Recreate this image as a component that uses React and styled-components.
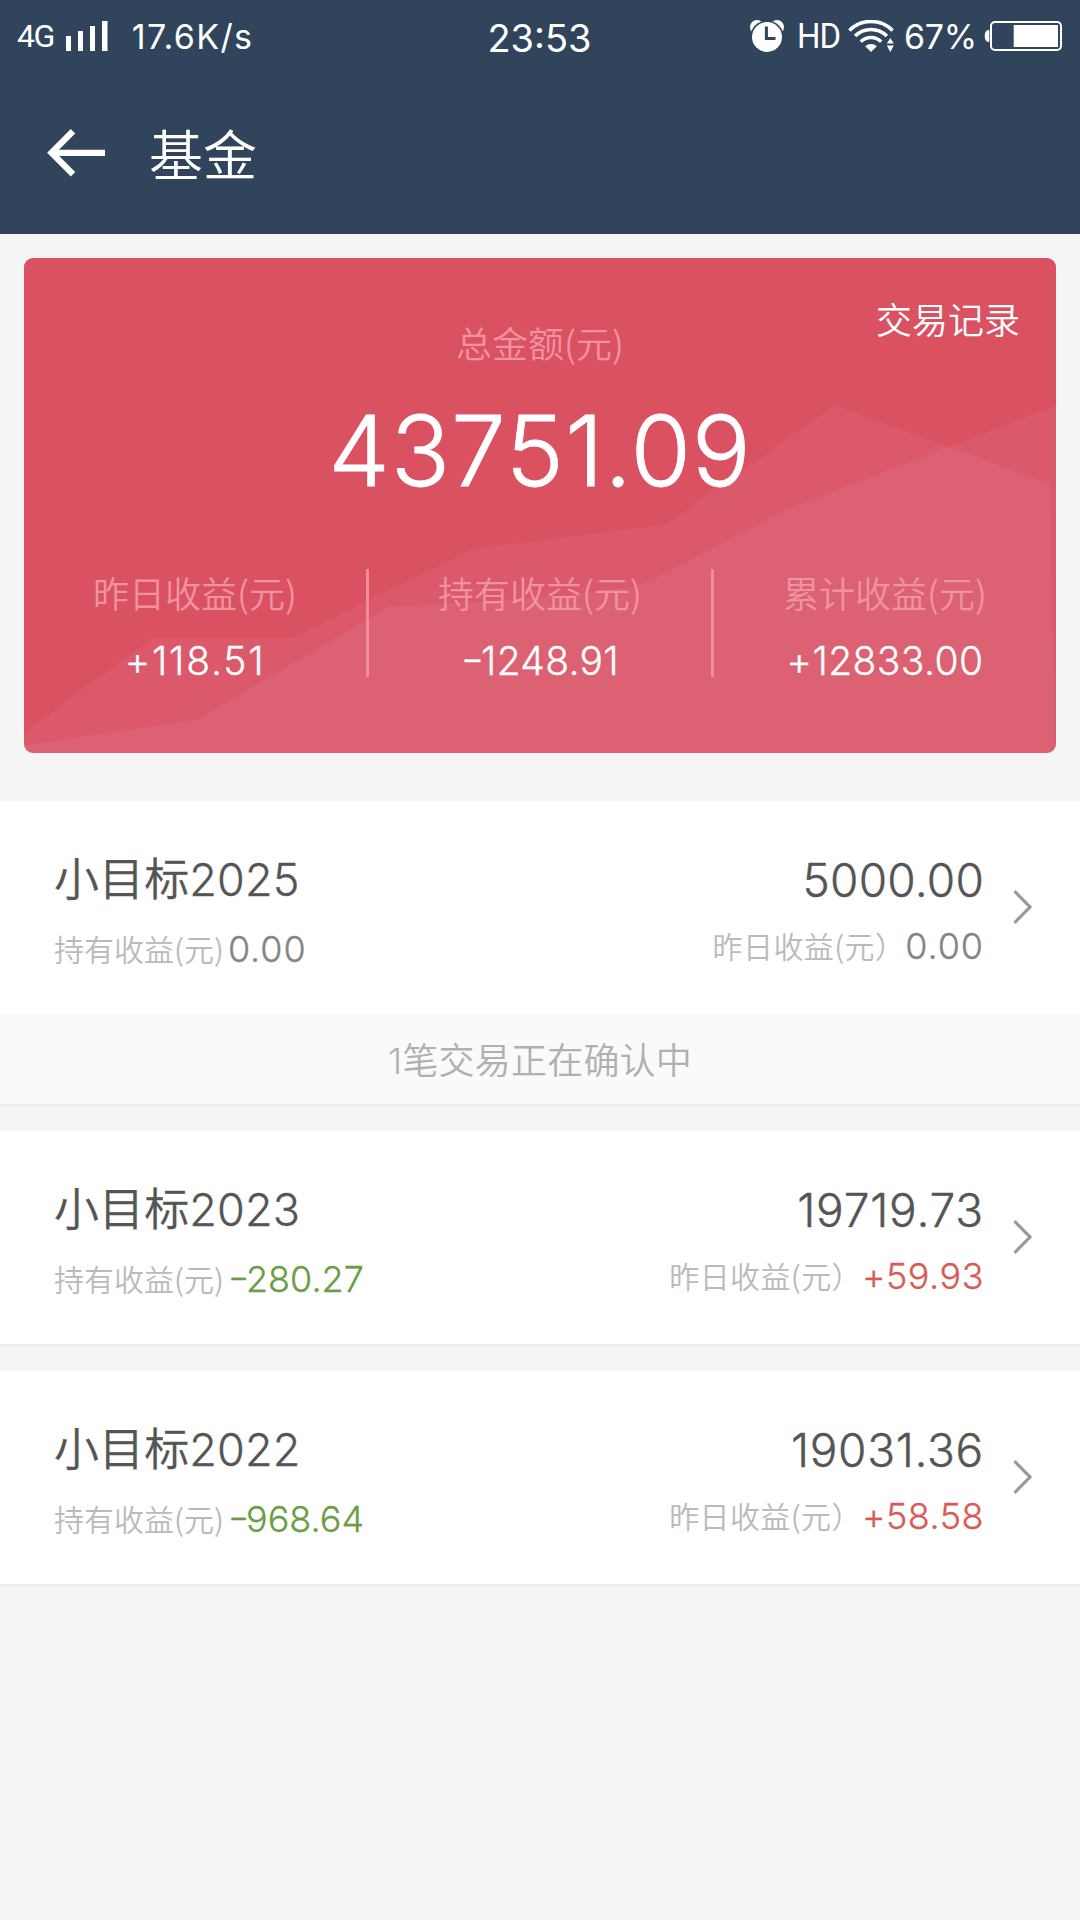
import React from 'react';
import styled, { createGlobalStyle } from 'styled-components';

const latin = `Inter, 'Noto Sans CJK SC', sans-serif`;
const cjk = `'Noto Sans CJK SC', Inter, sans-serif`;

const GlobalStyle = createGlobalStyle`
  body {
    margin: 0;
    background: #f5f5f5;
    font-family: ${latin};
    font-weight: 350;
  }
`;

const Page = styled.div`
  width: 1080px;
  min-height: 1920px;
  background: #f5f5f5;
`;

const TopBar = styled.header`
  height: 234px;
  color: #fff;
  background: #30445c;
`;

const StatusBar = styled.div`
  display: grid;
  grid-template-columns: 1fr auto 1fr;
  align-items: center;
  height: 72px;
  padding: 0 18px 0 17px;
  box-sizing: border-box;
  font-weight: 400;
  white-space: nowrap;
`;

const StatusGroup = styled.div`
  display: flex;
  align-items: center;
  justify-content: ${(props) => (props.$end ? 'flex-end' : 'flex-start')};

  svg {
    display: block;
    flex: none;
  }
`;

const Network = styled.span`
  margin-right: 12px;
  font-family: Roboto, sans-serif;
  font-size: 32px;
  line-height: 36px;
  letter-spacing: -1.5px;
`;

const Speed = styled.span`
  margin-left: 24px;
  padding-top: 2px;
  font-size: 34px;
  line-height: 36px;
  letter-spacing: 1.4px;
`;

const Time = styled.span`
  padding-top: 3px;
  font-size: 38px;
  line-height: 40px;
`;

const HdMark = styled.span`
  width: 45px;
  margin: 0 6px 0 13px;
  padding-top: 2px;
  font-family: Roboto, sans-serif;
  font-size: 35px;
  line-height: 36px;
  letter-spacing: -1px;
  transform: scaleX(0.94);
  transform-origin: left;
`;

const Percent = styled.span`
  margin: 0 7px 0 10px;
  padding-top: 2px;
  font-size: 34px;
  line-height: 36px;
  letter-spacing: -0.2px;
`;

const NavBar = styled.div`
  display: flex;
  align-items: center;
  height: 162px;
  padding-left: 47px;
`;

const NavTitle = styled.h1`
  margin: 0 0 0 44px;
  font-family: ${cjk};
  font-size: 54px;
  font-weight: 350;
  line-height: 60px;
`;

const Card = styled.section`
  position: relative;
  height: 495px;
  margin: 24px 24px 48px;
  border-radius: 9px;
  overflow: hidden;
  color: #fff;
  background: #da5162;
`;

const CardChart = styled.svg`
  position: absolute;
  inset: 0;
`;

const CardBody = styled.div`
  position: relative;
  padding-top: 40px;
`;

const CardHead = styled.div`
  display: grid;
  grid-template-columns: 1fr auto 1fr;
  align-items: start;
`;

const SoftLabel = styled.div`
  font-family: ${cjk};
  font-size: 36px;
  line-height: 40px;
  color: #f093a0;
`;

const TotalLabel = styled(SoftLabel)`
  grid-column: 2;
  margin-top: 24px;
`;

const RecordLink = styled.a`
  justify-self: end;
  margin-right: 36px;
  font-family: ${cjk};
  font-size: 36px;
  line-height: 40px;
`;

const Total = styled.div`
  margin-top: 39px;
  font-size: 98px;
  line-height: 100px;
  letter-spacing: 0.9px;
  text-align: center;
  -webkit-text-stroke: 0.8px;
`;

const Stats = styled.div`
  display: flex;
  margin-top: 68px;
`;

const Stat = styled.div`
  flex: 1;
  padding-top: 3px;
  text-align: center;
`;

const StatValue = styled.div`
  margin-top: 24px;
  font-size: 39px;
  line-height: 50px;
  letter-spacing: ${(props) => props.$tracking}px;
  -webkit-text-stroke: 0.3px;
`;

const Divider = styled.i`
  width: 3px;
  height: 108px;
  background: #ee8e9b;
`;

/* the minus sits at half digit height and is wider than a plain hyphen */
const Minus = styled.span`
  display: inline-block;
  margin-right: 0.05em;
  transform: translateY(-0.06em) scaleX(1.3);
  transform-origin: left;
`;

const Fund = styled.section`
  margin-bottom: 24px;
  border-bottom: 3px solid #ededed;
  background: #fff;
`;

const FundRow = styled.div`
  display: flex;
  align-items: flex-start;
  height: 213px;
  padding: 47px 48px 0 54px;
  box-sizing: border-box;
`;

const FundSide = styled.div`
  display: flex;
  flex-direction: column;
  align-items: ${(props) => (props.$end ? 'flex-end' : 'flex-start')};
  gap: ${(props) => (props.$end ? 9 : 12)}px;
  margin-left: ${(props) => (props.$end ? 'auto' : 0)};
`;

const FundName = styled.div`
  font-size: 45px;
  line-height: 64px;
  letter-spacing: 0.1px;
  color: #555;
  -webkit-text-stroke: 0.3px;
`;

const FundAmount = styled.div`
  font-size: 46px;
  line-height: 64px;
  letter-spacing: ${(props) => props.$tracking}px;
  color: #555;
  -webkit-text-stroke: 0.4px;
`;

const Profit = styled.div`
  display: flex;
  align-items: center;
  height: 50px;
`;

const ProfitLabel = styled.span`
  margin-top: -3px;
  font-family: ${cjk};
  font-size: 30px;
  line-height: 50px;
  letter-spacing: ${(props) => (props.$wide ? 0.4 : 0)}px;
  color: #bababa;
`;

const tones = {
  flat: { color: '#858585', tracking: 0.9 },
  down: { color: '#6b9d45', tracking: 0 },
  up: { color: '#d75c57', tracking: 0.5 },
};

const ProfitValue = styled.span`
  margin-left: ${(props) => props.$gap || 0}px;
  font-size: 36px;
  line-height: 50px;
  letter-spacing: ${(props) => tones[props.$tone].tracking}px;
  color: ${(props) => tones[props.$tone].color};
  -webkit-text-stroke: 0.3px;
`;

const Chevron = styled.svg`
  margin: 42px 0 0 29px;
`;

const Pending = styled.div`
  height: 90px;
  box-sizing: border-box;
  padding-top: 2px;
  font-size: 36px;
  line-height: 90px;
  letter-spacing: 0.2px;
  text-align: center;
  color: #b0b0b0;
  background: #fafafa;
`;

const stats = [
  { label: '昨日收益(元)', value: '+118.51', tracking: 1.8 },
  { label: '持有收益(元)', value: '-1248.91', tracking: 0.3 },
  { label: '累计收益(元)', value: '+12833.00', tracking: 0.4 },
];

const funds = [
  {
    name: '小目标2025',
    amount: '5000.00',
    tracking: 0.2,
    held: '0.00',
    heldTone: 'flat',
    daily: '0.00',
    dailyTone: 'flat',
    pending: '1笔交易正在确认中',
  },
  {
    name: '小目标2023',
    amount: '19719.73',
    tracking: 0.8,
    held: '-280.27',
    heldTone: 'down',
    daily: '+59.93',
    dailyTone: 'up',
  },
  {
    name: '小目标2022',
    amount: '19031.36',
    tracking: 0.7,
    held: '-968.64',
    heldTone: 'down',
    daily: '+58.58',
    dailyTone: 'up',
  },
];

const SignalIcon = () => (
  <svg width="42" height="30" fill="#fff">
    <rect x="0" y="15" width="5" height="15" />
    <rect x="12" y="10" width="5" height="20" />
    <rect x="24" y="5" width="5" height="25" />
    <rect x="36" y="0" width="5.5" height="30" />
  </svg>
);

const AlarmIcon = () => (
  <svg width="34" height="32" viewBox="0 0 34 32">
    <circle cx="7" cy="7" r="7" fill="#fff" />
    <circle cx="27" cy="7" r="7" fill="#fff" />
    <circle cx="17" cy="17" r="16.6" fill="#30445c" />
    <circle cx="17" cy="17" r="15" fill="#fff" />
    <path d="M16.4 6.5V18.4H25.5" fill="none" stroke="#30445c" strokeWidth="3" />
  </svg>
);

const WifiIcon = () => (
  <svg width="46" height="32" viewBox="0 0 46 32">
    <g fill="none" stroke="#fff" strokeWidth="3.5">
      <path d="M1.4 10.4A30.5 30.5 0 0 1 44.6 10.4" />
      <path d="M7.1 16.1A22.5 22.5 0 0 1 38.9 16.1" />
      <path d="M12.8 21.8A14.5 14.5 0 0 1 33.2 21.8" />
    </g>
    <path d="M23 32L17.2 26.2A8.4 8.4 0 0 1 28.8 26.2Z" fill="#fff" />
    <path d="M38.8 23.6L42.3 18L45.8 23.6ZM38.8 25.4L42.3 32L45.8 25.4Z" fill="#fff" />
  </svg>
);

const BatteryIcon = () => (
  <svg width="78" height="30" viewBox="0 0 78 30">
    <path d="M5.3 9H4Q0.7 10 0.7 15T4 21H5.3Z" fill="#fff" />
    <rect x="7" y="1" width="70" height="28" rx="4" fill="none" stroke="#fff" strokeWidth="2" />
    <rect x="29.7" y="4" width="44.3" height="22" fill="#fff" />
  </svg>
);

const BackIcon = () => (
  <svg width="58" height="48" viewBox="0 0 58 48">
    <path
      d="M26 2.3L4.5 23.8L26 45.3M5 23.8H58"
      fill="none"
      stroke="#fff"
      strokeWidth="6.2"
    />
  </svg>
);

const Signed = ({ value }) =>
  value.startsWith('-') ? (
    <>
      <Minus>-</Minus>
      {value.slice(1)}
    </>
  ) : (
    value
  );

const FundItem = ({ fund }) => (
  <Fund>
    <FundRow>
      <FundSide>
        <FundName>{fund.name}</FundName>
        <Profit>
          <ProfitLabel>持有收益(元)</ProfitLabel>
          <ProfitValue $tone={fund.heldTone} $gap={4}>
            <Signed value={fund.held} />
          </ProfitValue>
        </Profit>
      </FundSide>
      <FundSide $end>
        <FundAmount $tracking={fund.tracking}>{fund.amount}</FundAmount>
        <Profit>
          <ProfitLabel $wide>昨日收益(元）</ProfitLabel>
          <ProfitValue $tone={fund.dailyTone}>
            <Signed value={fund.daily} />
          </ProfitValue>
        </Profit>
      </FundSide>
      <Chevron width="19" height="34" viewBox="0 0 19 34">
        <path d="M1.5 1.2L17 17L1.5 32.8" fill="none" stroke="#999" strokeWidth="3.2" />
      </Chevron>
    </FundRow>
    {fund.pending && <Pending>{fund.pending}</Pending>}
  </Fund>
);

export default function App() {
  return (
    <Page>
      <GlobalStyle />
      <TopBar>
        <StatusBar>
          <StatusGroup>
            <Network>4G</Network>
            <SignalIcon />
            <Speed>17.6K/s</Speed>
          </StatusGroup>
          <Time>23:53</Time>
          <StatusGroup $end>
            <AlarmIcon />
            <HdMark>HD</HdMark>
            <WifiIcon />
            <Percent>67%</Percent>
            <BatteryIcon />
          </StatusGroup>
        </StatusBar>
        <NavBar>
          <BackIcon />
          <NavTitle>基金</NavTitle>
        </NavBar>
      </TopBar>

      <Card>
        {/* two translucent trend areas behind the figures */}
        <CardChart width="1032" height="495" viewBox="0 0 1032 495">
          <path
            d="M0 474.5L129 380H268L447 291.5L641 266.5L811 147.5L1026 226L1031.5 495H0Z"
            fill="rgba(246, 195, 226, 0.07)"
          />
          <path
            d="M0 487.5L174 461.5L365 349L516 340L616 328L763 251.5L1032 147.5V495H0Z"
            fill="rgba(230, 213, 220, 0.07)"
          />
        </CardChart>
        <CardBody>
          <CardHead>
            <TotalLabel>总金额(元)</TotalLabel>
            <RecordLink>交易记录</RecordLink>
          </CardHead>
          <Total>43751.09</Total>
          <Stats>
            {stats.map((stat, index) => (
              <React.Fragment key={index}>
                {index > 0 && <Divider />}
                <Stat>
                  <SoftLabel>{stat.label}</SoftLabel>
                  <StatValue $tracking={stat.tracking}>
                    <Signed value={stat.value} />
                  </StatValue>
                </Stat>
              </React.Fragment>
            ))}
          </Stats>
        </CardBody>
      </Card>

      {funds.map((fund, index) => (
        <FundItem key={index} fund={fund} />
      ))}
    </Page>
  );
}
